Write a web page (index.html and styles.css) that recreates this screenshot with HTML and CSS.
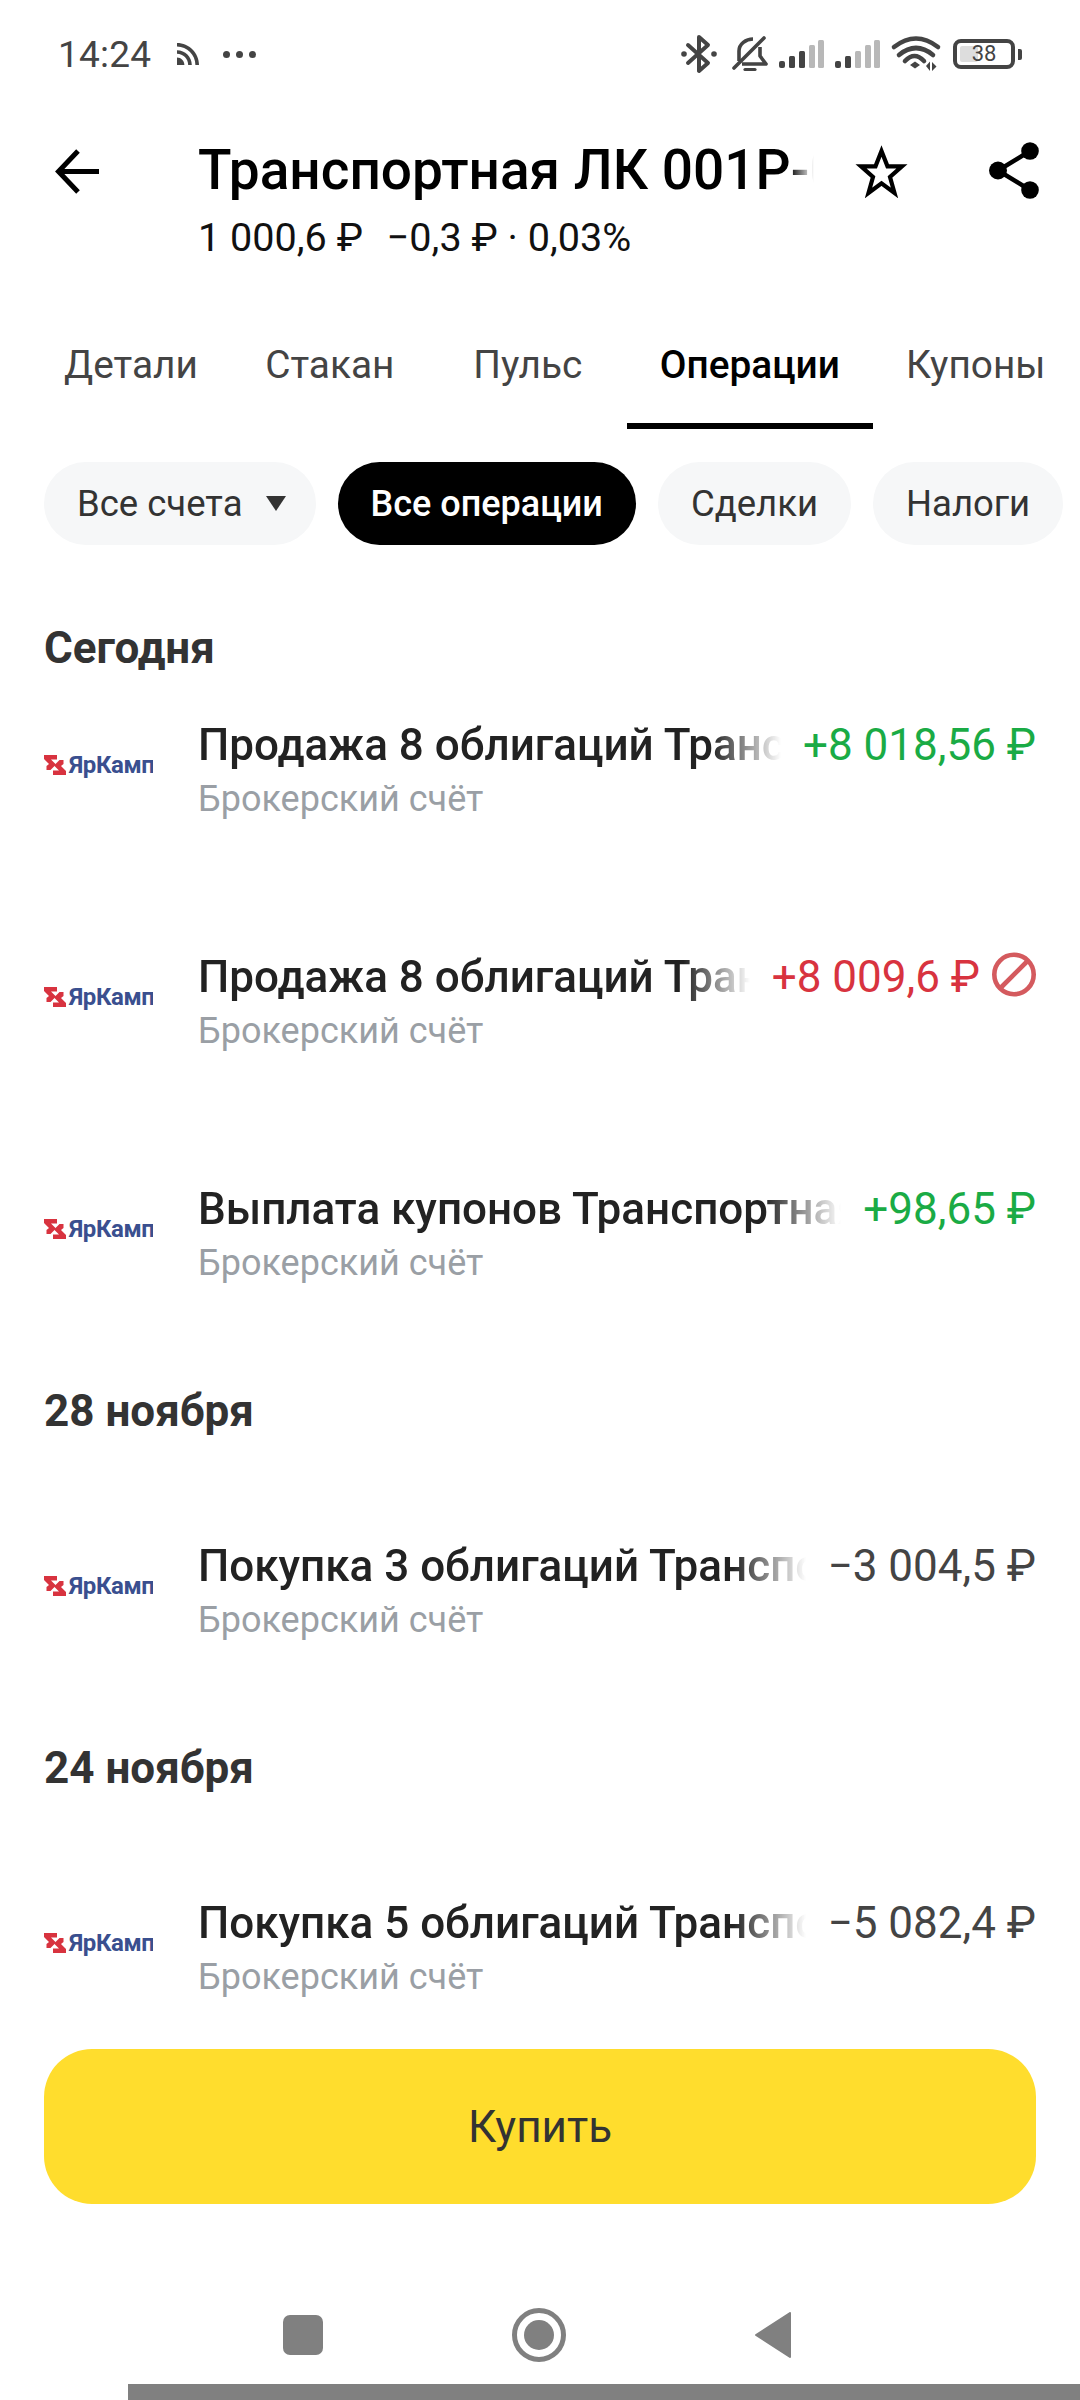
FILE: index.html
```html
<!DOCTYPE html>
<html lang="ru">
<head>
<meta charset="utf-8">
<title>Операции</title>
<link rel="stylesheet" href="styles.css">
</head>
<body>
<svg class="defs" width="0" height="0" aria-hidden="true">
  <symbol id="yk" viewBox="0 0 22 20">
    <path fill="#d8333f" d="M0 0h13v4.500H7l5 5-5.500 5.500H2.500V11L5 9 0 4z"/>
    <path fill="#d8333f" d="M22 20H9v-4.500h6l-5-5L15.500 5h4v4L17 11l5 5z"/>
  </symbol>
</svg>

<header class="status">
  <span class="time">14:24</span>
  <svg class="st-cast" viewBox="0 0 24 24"><path fill="#444" d="M1 1v3.600C11.100 4.600 19.400 12.900 19.400 23H23C23 10.900 13.100 1 1 1zm0 7.200v3.600c6.200 0 11.200 5 11.200 11.200h3.600C15.800 14.800 9.200 8.200 1 8.200zM1 15.600V23h7.400c0-4.100-3.300-7.400-7.400-7.400z"/></svg>
  <span class="st-dots"><i></i><i></i><i></i></span>
  <span class="st-spacer"></span>
  <svg class="st-bt" viewBox="0 0 36 40"><path fill="none" stroke="#444" stroke-width="4" stroke-linejoin="round" stroke-linecap="round" d="M7 11l20 18-9 8V3l9 8L7 29"/><circle cx="3" cy="20" r="2.800" fill="#444"/><circle cx="33" cy="20" r="2.800" fill="#444"/></svg>
  <svg class="st-bell" viewBox="0 0 36 36"><path fill="none" stroke="#444" stroke-width="3.600" stroke-linejoin="round" d="M7 25V15C7 8 14 3 21 3M28 11V20L34 28H10"/><path stroke="#444" stroke-width="3.600" stroke-linecap="round" d="M2 32L32 2"/><path stroke="#444" stroke-width="3.200" stroke-linecap="round" d="M13 33.500h10"/></svg>
  <svg class="st-sig" viewBox="0 0 45 28"><rect x="0" y="21" width="6" height="7" rx="2" fill="#444"/><rect x="10" y="16" width="6" height="12" rx="1.500" fill="#444"/><rect x="20" y="11" width="6" height="17" rx="1.500" fill="#444"/><rect x="30" y="5" width="6" height="23" rx="1.500" fill="#b8b8b8"/><rect x="39" y="0" width="6" height="28" rx="1.500" fill="#b8b8b8"/></svg>
  <svg class="st-sig" viewBox="0 0 45 28"><rect x="0" y="21" width="6" height="7" rx="2" fill="#444"/><rect x="10" y="16" width="6" height="12" rx="1.500" fill="#444"/><rect x="20" y="11" width="6" height="17" rx="1.500" fill="#b8b8b8"/><rect x="30" y="5" width="6" height="23" rx="1.500" fill="#b8b8b8"/><rect x="39" y="0" width="6" height="28" rx="1.500" fill="#b8b8b8"/></svg>
  <svg class="st-wifi" viewBox="0 0 46 36"><path fill="none" stroke="#444" stroke-width="4.600" stroke-linecap="round" d="M2 11Q24-6 46 11M7 19Q24 5 41 19M13 25Q22.500 15 32 25"/><path fill="#444" d="M18 29l5-3.500 5 3.500-5 3.500zM34 30l4-4.500V35zM40 26l4.500 4.500L40 35z"/></svg>
  <span class="st-batt"><span class="st-level"></span><span class="st-num">38</span></span>
  <span class="st-nub"></span>
</header>

<section class="head">
  <svg class="ic-back" viewBox="0 0 44 45"><path fill="none" stroke="#000" stroke-width="5" d="M44 22.500H4M23 2L3.500 22.500 23 43"/></svg>
  <div class="head-text">
    <h1 class="title">Транспортная ЛК 001Р-05</h1>
    <p class="price">1 000,6 ₽ <span class="change">−0,3 ₽ · 0,03%</span></p>
  </div>
  <svg class="ic-star" viewBox="0 0 53 53"><path fill="none" stroke="#000" stroke-width="4.200" d="M26.500 6l6 15.300L47 21.300 35 32l4.500 16-13-9.600-13 9.600L18 32 6 21.300 20.500 21.300z"/></svg>
  <svg class="ic-share" viewBox="0 0 50 57"><path fill="none" stroke="#000" stroke-width="4.500" d="M41 9L9 28.500 41 48"/><circle cx="41" cy="9" r="8.800"/><circle cx="41" cy="48" r="8.800"/><circle cx="9" cy="28.500" r="9"/></svg>
</section>

<nav class="tabs">
  <a class="tab">Детали</a>
  <a class="tab">Стакан</a>
  <a class="tab">Пульс</a>
  <a class="tab tab-on">Операции</a>
  <a class="tab">Купоны</a>
</nav>

<div class="chips">
  <span class="chip">Все счета<i class="caret"></i></span>
  <span class="chip chip-on">Все операции</span>
  <span class="chip">Сделки</span>
  <span class="chip">Налоги</span>
</div>

<main class="list">
  <section class="day day-first">
    <h2 class="day-title">Сегодня</h2>
    <article class="row">
      <div class="logo"><svg class="logo-mark"><use href="#yk"/></svg><span class="logo-text">ЯрКамп</span></div>
      <div class="info"><div class="op-name">Продажа 8 облигаций Транспортная ЛК</div><div class="op-acc">Брокерский счёт</div></div>
      <div class="sum sum-plus">+8 018,56 ₽</div>
    </article>
    <article class="row">
      <div class="logo"><svg class="logo-mark"><use href="#yk"/></svg><span class="logo-text">ЯрКамп</span></div>
      <div class="info"><div class="op-name">Продажа 8 облигаций Транспортная ЛК</div><div class="op-acc">Брокерский счёт</div></div>
      <div class="sum sum-fail">+8 009,6 ₽<svg class="ic-ban" viewBox="0 0 44 45"><circle cx="22" cy="22.500" r="19.700" fill="none" stroke="#d45a5e" stroke-width="4.600"/><path stroke="#d45a5e" stroke-width="4.600" d="M36 8.500L8 36.500"/></svg></div>
    </article>
    <article class="row">
      <div class="logo"><svg class="logo-mark"><use href="#yk"/></svg><span class="logo-text">ЯрКамп</span></div>
      <div class="info"><div class="op-name">Выплата купонов Транспортная ЛК 001Р</div><div class="op-acc">Брокерский счёт</div></div>
      <div class="sum sum-plus">+98,65 ₽</div>
    </article>
  </section>
  <section class="day">
    <h2 class="day-title">28 ноября</h2>
    <article class="row">
      <div class="logo"><svg class="logo-mark"><use href="#yk"/></svg><span class="logo-text">ЯрКамп</span></div>
      <div class="info"><div class="op-name">Покупка 3 облигаций Транспортная ЛК</div><div class="op-acc">Брокерский счёт</div></div>
      <div class="sum">−3 004,5 ₽</div>
    </article>
  </section>
  <section class="day">
    <h2 class="day-title">24 ноября</h2>
    <article class="row">
      <div class="logo"><svg class="logo-mark"><use href="#yk"/></svg><span class="logo-text">ЯрКамп</span></div>
      <div class="info"><div class="op-name">Покупка 5 облигаций Транспортная ЛК</div><div class="op-acc">Брокерский счёт</div></div>
      <div class="sum">−5 082,4 ₽</div>
    </article>
  </section>
</main>

<div class="buy-wrap"><button class="buy">Купить</button></div>

<footer class="nav">
  <span class="nav-square"></span>
  <span class="nav-circle"><span class="nav-dot"></span></span>
  <svg class="nav-back" viewBox="0 0 36 46"><path fill="#808080" stroke="#808080" stroke-width="2" stroke-linejoin="round" d="M35 1v44L1 23z"/></svg>
</footer>
<div class="bottom-bar"></div>
</body>
</html>
```
FILE: styles.css
```css
* { box-sizing: border-box; }
html, body { margin: 0; padding: 0; }
body {
  width: 1080px;
  height: 2400px;
  overflow: hidden;
  display: flex;
  flex-direction: column;
  background: #fff;
  font-family: Roboto, "Noto Sans", sans-serif;
  color: #222;
}
.defs { position: absolute; }

/* status bar */
.status {
  height: 108px;
  flex: none;
  display: flex;
  align-items: center;
  padding: 0 58px;
  color: #444;
}
.time { font-size: 37px; line-height: 1; letter-spacing: .2px; }
.st-cast { width: 24px; height: 24px; margin-left: 25px; }
.st-dots { display: flex; gap: 6px; margin-left: 23px; }
.st-dots i { width: 7px; height: 7px; border-radius: 50%; background: #444; }
.st-spacer { flex: 1; }
.st-bt { width: 36px; height: 40px; }
.st-bell { width: 36px; height: 36px; margin-left: 15px; }
.st-sig { width: 45px; height: 28px; margin-left: 11px; }
.st-wifi { width: 46px; height: 36px; margin-left: 12px; overflow: visible; }
.st-batt {
  position: relative;
  width: 62px;
  height: 30px;
  margin-left: 15px;
  border: 4px solid #444;
  border-radius: 8px;
  display: flex;
  align-items: center;
  justify-content: center;
}
.st-level { position: absolute; left: 3px; top: 3px; bottom: 3px; width: 18px; background: #ddd; border-radius: 2px; }
.st-num { position: relative; font-size: 22px; line-height: 1; color: #444; }
.st-nub { width: 4px; height: 11px; background: #444; margin-left: 3px; border-radius: 0 2px 2px 0; }

/* header */
.head {
  flex: none;
  height: 160px;
  display: flex;
  align-items: flex-start;
  padding-left: 55px;
}
.ic-back { width: 44px; height: 45px; margin-top: 41px; flex: none; }
.head-text { width: 616px; margin-left: 99px; flex: none; }
.title {
  margin: 29px 0 0;
  font-size: 55px;
  line-height: 66px;
  font-weight: 500;
  color: #000;
  white-space: nowrap;
  overflow: hidden;
  -webkit-mask-image: linear-gradient(to right, #000 96%, transparent 100%);
  mask-image: linear-gradient(to right, #000 96%, transparent 100%);
}
.price { margin: 13px 0 0; font-size: 39.600px; line-height: 44px; color: #111; white-space: nowrap; }
.change { margin-left: 14px; }
.ic-star { width: 53px; height: 53px; margin: 37px 0 0 41px; flex: none; }
.ic-share { width: 50px; height: 57px; margin: 34px 0 0 81px; flex: none; }

/* tabs */
.tabs {
  flex: none;
  height: 161px;
  padding: 52px 0 0 31px;
  display: flex;
}
.tab {
  min-width: 198px;
  height: 109px;
  padding: 0 33px;
  font-size: 38.800px;
  line-height: 90px;
  text-align: center;
  color: #444;
  white-space: nowrap;
}
.tab-on { color: #000; font-weight: 500; border-bottom: 6px solid #000; }

/* chips */
.chips {
  flex: none;
  display: flex;
  gap: 22px;
  padding: 33px 0 0 44px;
}
.chip {
  height: 83px;
  padding: 0 33px;
  border-radius: 42px;
  background: #f6f7f8;
  display: flex;
  align-items: center;
  font-size: 36.500px;
  color: #333;
  white-space: nowrap;
}
.chip-on { background: #000; color: #fff; font-weight: 500; font-size: 36px; }
.caret {
  width: 0;
  height: 0;
  margin: 0 -3px 0 23px;
  border-left: 10px solid transparent;
  border-right: 10px solid transparent;
  border-top: 15px solid #333;
}

/* list */
.list { flex: 1; min-height: 0; padding: 75px 44px 0; }
.day { display: flex; flex-direction: column; gap: 127px; margin-top: 94px; }
.day:first-child { margin-top: 0; }
.day:not(.day-first) .day-title { margin-bottom: -25px; }
.day-first .day-title { margin-bottom: -83px; }
.day-title { margin: 0; font-size: 44px; line-height: 56px; font-weight: 700; color: #333; }
.row { display: flex; height: 105px; }
.logo { width: 109px; height: 32px; margin-top: 29px; display: flex; align-items: center; gap: 3px; overflow: hidden; flex: none; }
.logo-mark { width: 22px; height: 20px; flex: none; }
.logo-text { font-size: 24px; font-weight: 700; color: #3a4f8f; white-space: nowrap; letter-spacing: -.4px; }
.info { flex: 1; min-width: 0; margin-left: 45px; }
.op-name {
  font-size: 44px;
  line-height: 50px;
  font-weight: 500;
  color: #222;
  white-space: nowrap;
  overflow: hidden;
  -webkit-mask-image: linear-gradient(to right, #000 88%, transparent 100%);
  mask-image: linear-gradient(to right, #000 88%, transparent 100%);
}
.op-acc { font-size: 36px; line-height: 58px; color: #9a9fa5; white-space: nowrap; }
.sum {
  flex: none;
  margin-left: 22px;
  display: flex;
  align-items: flex-start;
  font-size: 44px;
  line-height: 50px;
  color: #444;
  white-space: pre;
}
.sum-plus { color: #1aab45; }
.sum-fail { color: #d8333f; }
.ic-ban { width: 44px; height: 45px; margin-left: 12px; flex: none; }

/* buy */
.buy-wrap { flex: none; padding: 0 44px; }
.buy {
  display: block;
  width: 100%;
  height: 155px;
  border: 0;
  border-radius: 48px;
  background: #ffdd2d;
  font: 400 44px Roboto, sans-serif;
  color: #333;
}

/* nav */
.nav {
  flex: none;
  height: 180px;
  padding: 104px 0 0 283px;
  display: flex;
  align-items: flex-start;
}
.nav-square { width: 40px; height: 40px; margin-top: 7px; border-radius: 7px; background: #808080; }
.nav-circle {
  width: 54px;
  height: 54px;
  margin-left: 189px;
  border-radius: 50%;
  border: 5px solid #808080;
  display: flex;
  align-items: center;
  justify-content: center;
}
.nav-dot { width: 30px; height: 30px; border-radius: 50%; background: #808080; }
.nav-back { width: 36px; height: 46px; margin-left: 189px; margin-top: 4px; }
.bottom-bar { flex: none; height: 16px; margin-left: 128px; background: #808080; }
```
